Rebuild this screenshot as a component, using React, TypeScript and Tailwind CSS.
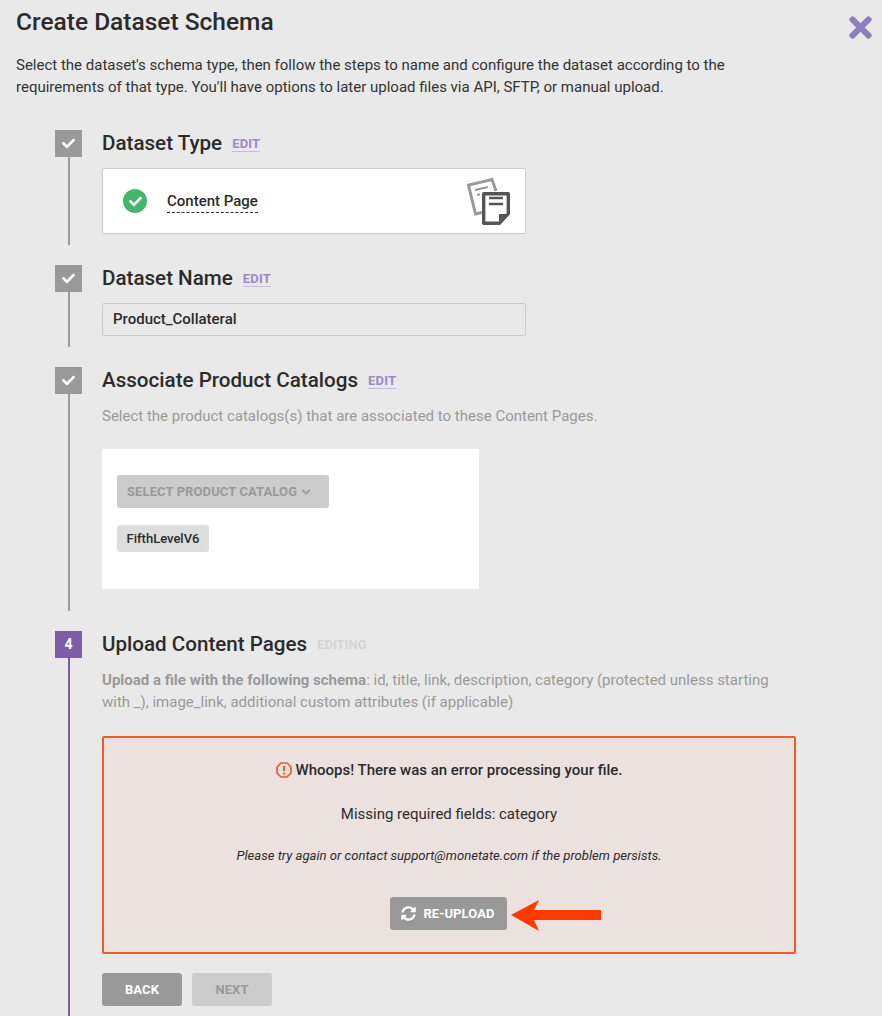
import React from 'react';
import { FaCheck, FaTimes, FaSyncAlt, FaChevronDown } from 'react-icons/fa';

const EditLink: React.FC = () => (
  <span className="text-[13px] leading-[15px] font-bold text-[#9a8bc4] border-b border-[#c4bbdc] tracking-[0.2px]">EDIT</span>
);

const Step: React.FC<{
  badge: React.ReactNode;
  active?: boolean;
  className: string;
  children: React.ReactNode;
}> = ({ badge, active, className, children }) => (
  <div className={`flex ${className}`}>
    <div className="w-[47px] ml-[55px] shrink-0 flex flex-col">
      <div className={`w-[27px] h-[27px] flex items-center justify-center text-white text-[14px] font-bold ${active ? 'bg-[#7b5ea7]' : 'bg-[#999999]'}`}>
        {badge}
      </div>
      <div className={`w-[2px] ml-[13px] flex-1 ${active ? 'bg-[#7b5ea7]' : 'bg-[#999999]'}`} />
    </div>
    <div className="flex-1 min-w-0">{children}</div>
  </div>
);

const StepTitle: React.FC<{ title: string; children?: React.ReactNode }> = ({ title, children }) => (
  <div className="flex items-center h-[27px] gap-[10px]">
    <h2 className="text-[20.6px] leading-[27px] font-medium text-[#2b2b2b]">{title}</h2>
    {children}
  </div>
);

const ContentPageIcon = () => (
  <svg width="46" height="48" viewBox="0 0 46 48">
    <path d="M30 14 L26 2.5 L2.5 8 L9.5 37 L16 35.5" fill="none" stroke="#999999" strokeWidth="3" />
    <path d="M9 13 L22 10 M11 18 L14 17.3" fill="none" stroke="#999999" strokeWidth="2" />
    <path d="M17.7 16.7h24.6v20l-9 9.6H17.7z" fill="#ffffff" stroke="#555555" strokeWidth="3.4" strokeLinejoin="round" />
    <path d="M23 21h14M23 27h14" stroke="#555555" strokeWidth="2.4" fill="none" />
    <path d="M33 47v-10h10z" fill="#555555" />
  </svg>
);

const ErrorIcon = () => (
  <svg width="16" height="16" viewBox="0 0 16 16">
    <path d="M5 1h6l4 4v6l-4 4H5l-4-4V5z" fill="none" stroke="#f15a29" strokeWidth="1.7" strokeLinejoin="round" />
    <path d="M8 4v5" stroke="#f15a29" strokeWidth="2" />
    <path d="M8 10.5v2" stroke="#f15a29" strokeWidth="2" />
  </svg>
);

export default function App() {
  return (
    <div className="relative w-[882px] h-[1016px] overflow-hidden bg-[#e9e9e9] text-[#2b2b2b] font-['Roboto',sans-serif]">
      <header className="flex justify-between h-[39px] pl-4 pr-[10px] pt-[5px]">
        <h1 className="text-[24.5px] leading-[34px] font-medium text-[#2b2b2b]">Create Dataset Schema</h1>
        <FaTimes className="mt-[6px] w-[23px] h-[33px] shrink-0 text-[#8d7fbd]" />
      </header>
      <p className="ml-4 mt-[15px] w-[740px] text-[15px] leading-[22px] text-[#333333]">
        Select the dataset's schema type, then follow the steps to name and configure the dataset according to the requirements of that type. You'll have options to later upload files via API, SFTP, or manual upload.
      </p>

      <div className="mt-[32px] flex flex-col">
        <Step badge={<FaCheck className="w-[13px] h-[13px]" />} className="h-[115px] mb-[20px]">
          <StepTitle title="Dataset Type"><EditLink /></StepTitle>
          <div className="mt-[11px] w-[424px] h-[66px] bg-white border border-[#cccccc] rounded-[2px] flex items-center pl-[20px] pr-[13px]">
            <span className="w-[24px] h-[24px] rounded-full bg-[#46b56b] flex items-center justify-center text-white">
              <FaCheck className="w-[13px] h-[13px]" />
            </span>
            <span className="ml-[20px] text-[15px] leading-[22px] font-medium text-[#2b2b2b] border-b border-dashed border-[#2b2b2b]">Content Page</span>
            <span className="ml-auto flex"><ContentPageIcon /></span>
          </div>
        </Step>

        <Step badge={<FaCheck className="w-[13px] h-[13px]" />} className="h-[82px] mb-[20px]">
          <StepTitle title="Dataset Name"><EditLink /></StepTitle>
          <div className="mt-[11px] w-[424px] h-[33px] bg-[#e9e9e9] border border-[#cccccc] rounded-[2px] flex items-center pl-[10px] text-[15px] font-medium text-[#2b2b2b]">
            Product_Collateral
          </div>
        </Step>

        <Step badge={<FaCheck className="w-[13px] h-[13px]" />} className="h-[244px] mb-[20px]">
          <StepTitle title="Associate Product Catalogs"><EditLink /></StepTitle>
          <p className="mt-[11px] text-[15px] leading-[22px] text-[#999999]">Select the product catalogs(s) that are associated to these Content Pages.</p>
          <div className="mt-[22px] w-[377px] h-[140px] bg-white pl-[15px] pt-[26px]">
            <div className="w-[212px] h-[33px] rounded-[3px] bg-[#cccccc] text-[#999999] text-[13px] font-bold flex items-center pl-[10px] gap-[4px] tracking-[0.1px]">
              SELECT PRODUCT CATALOG
              <FaChevronDown className="w-[10px] h-[10px]" />
            </div>
            <div className="mt-[17px] w-[92px] h-[27px] rounded-[3px] bg-[#dddddd] text-[13px] font-medium text-[#2b2b2b] flex items-center justify-center">
              FifthLevelV6
            </div>
          </div>
        </Step>

        <Step badge="4" active className="h-[385px]">
          <StepTitle title="Upload Content Pages">
            <span className="text-[13px] font-bold text-[#d4d4d4]">EDITING</span>
          </StepTitle>
          <p className="mt-[11px] w-[680px] text-[15px] leading-[22px] text-[#999999]">
            <span className="font-bold">Upload a file with the following schema</span>: id, title, link, description, category (protected unless starting with _), image_link, additional custom attributes (if applicable)
          </p>
          <div className="mt-[23px] w-[694px] h-[218px] border-2 border-[#f15a29] bg-[#ebe2e0] rounded-[2px] flex flex-col items-center pt-[21px]">
            <div className="flex items-center gap-[4px] text-[15px] leading-[22px] font-medium text-[#2b2b2b]">
              <ErrorIcon />
              Whoops! There was an error processing your file.
            </div>
            <p className="mt-[22px] text-[15px] leading-[22px] text-[#2b2b2b]">Missing required fields: category</p>
            <p className="mt-[20px] text-[13.1px] leading-[22px] italic text-[#2b2b2b]">Please try again or contact support@monetate.com if the problem persists.</p>
            <div className="mt-[30px] -ml-[2px] w-[117px] h-[33px] rounded-[3px] bg-[#999999] text-white text-[13px] font-bold flex items-center justify-center gap-[7px] tracking-[0.1px]">
              <FaSyncAlt className="w-[15px] h-[15px]" />
              RE-UPLOAD
            </div>
          </div>
          <div className="mt-[19px] flex gap-[10px]">
            <div className="w-[80px] h-[33px] rounded-[3px] bg-[#999999] text-white text-[13px] font-bold flex items-center justify-center tracking-[0.1px]">BACK</div>
            <div className="w-[80px] h-[33px] rounded-[3px] bg-[#cccccc] text-[#999999] text-[13px] font-bold flex items-center justify-center tracking-[0.1px]">NEXT</div>
          </div>
        </Step>
      </div>

      {/* annotation arrow over the re-upload button */}
      <svg className="absolute left-[510px] top-[899px]" width="92" height="33" viewBox="0 0 92 33">
        <path d="M1 16 L29 1 L24 11 H91 V21 H24 L29 32 Z" fill="#ff3a00" />
      </svg>
    </div>
  );
}
